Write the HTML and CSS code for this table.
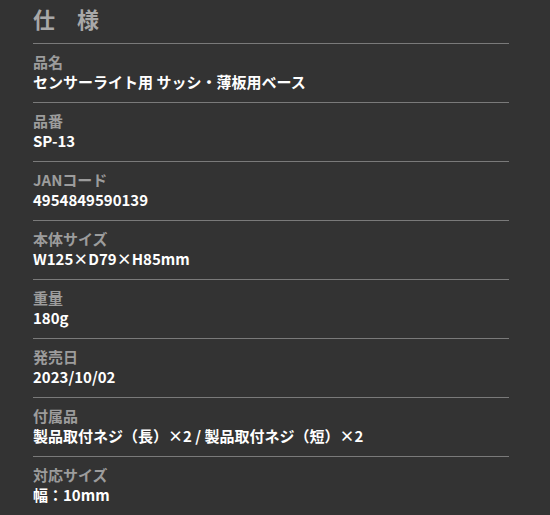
FILE: index.html
```html
<!DOCTYPE html>
<html lang="ja">
<head>
<meta charset="utf-8">
<link rel="stylesheet" href="styles.css">
</head>
<body>
<div class="spec">
  <h2 class="title">仕　様</h2>
  <dl class="list">
    <div class="row"><dt>品名</dt><dd>センサーライト用 サッシ・薄板用ベース</dd></div>
    <div class="row"><dt>品番</dt><dd>SP-13</dd></div>
    <div class="row"><dt>JANコード</dt><dd>4954849590139</dd></div>
    <div class="row"><dt>本体サイズ</dt><dd>W125×D79×H85mm</dd></div>
    <div class="row"><dt>重量</dt><dd>180g</dd></div>
    <div class="row"><dt>発売日</dt><dd>2023/10/02</dd></div>
    <div class="row"><dt>付属品</dt><dd>製品取付ネジ（長）×2 / 製品取付ネジ（短）×2</dd></div>
    <div class="row"><dt>対応サイズ</dt><dd>幅：10mm</dd></div>
  </dl>
</div>
</body>
</html>
```
FILE: styles.css
```css
html, body {
  margin: 0;
  padding: 0;
  background: #333333;
}
body {
  font-family: "Noto Sans CJK JP", "Noto Sans", sans-serif;
  height: 515px;
  overflow: hidden;
}
.spec {
  margin: 0 41px 0 33px;
}
.title {
  margin: 0;
  height: 43px;
  line-height: 37px;
  font-size: 22px;
  font-weight: 700;
  color: #a8a8a8;
}
.list {
  margin: 0;
}
.row {
  border-top: 1px solid #7a7a7a;
  padding: 8px 0 10px;
}
.row dt, .row dd {
  margin: 0;
  font-size: 15px;
  line-height: 20px;
  font-weight: 700;
}
.row dt {
  color: #9c9c9c;
}
.row dd {
  color: #ffffff;
}
```
